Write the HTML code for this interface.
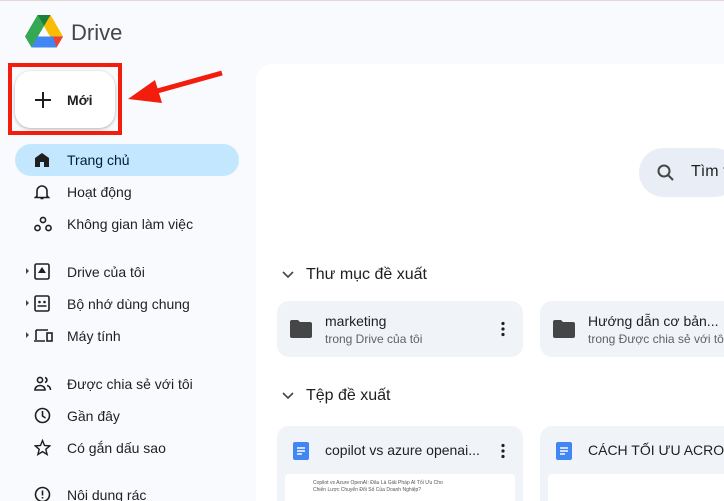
<!DOCTYPE html>
<html style="overflow:hidden"><head><meta charset="utf-8"><style>
*{margin:0;padding:0;box-sizing:border-box}
html,body{width:724px;height:501px;overflow:hidden}
body{background:#f8fafd;font-family:"Liberation Sans",Arial,sans-serif;color:#1f1f1f;position:relative}
.abs{position:absolute;white-space:nowrap}
.nav{position:absolute;left:67px;font-size:14px;color:#1f1f1f;white-space:nowrap}
.ic{position:absolute;left:34px}
.card{position:absolute;background:#f0f4f9;border-radius:12px}
</style></head><body>
<div class="abs" style="left:0;top:0;width:724px;height:1px;background:#e6d6dc"></div>
<svg class="abs" style="left:25px;top:15px" width="38" height="34" viewBox="0 0 38 34">
<path d="M12.5 0 L25.5 0 L38 21.5 L31.5 32.5 Z" fill="#fbbc04"/>
<path d="M12.5 0 L0 21.5 L6.5 32.5 L19 11 Z" fill="#34a853"/>
<path d="M6.5 32.5 L12.5 21.5 L38 21.5 L31.5 32.5 Z" fill="#4285f4"/>
<path d="M31.5 32.5 L38 21.5 L28 21.5 Z" fill="#ea4335"/>
<path d="M12.5 0 L19 11 L25.5 0Z" fill="#188038"/>
</svg>
<div class="abs" style="left:71px;top:20px;font-size:22px;color:#444746">Drive</div>
<div class="abs" style="left:8px;top:63px;width:114px;height:72px;border:4px solid #f21d0d"></div>
<div class="abs" style="left:15px;top:71px;width:100px;height:57px;background:#fff;border-radius:16px;box-shadow:0 1px 3px rgba(0,0,0,.3)"></div>
<svg class="abs" style="left:34px;top:91px" width="18" height="18"><path d="M9 1v16M1 9h16" stroke="#1f1f1f" stroke-width="2"/></svg>
<div class="abs" style="left:67px;top:92px;font-size:14px;font-weight:bold;color:#1f1f1f">Mới</div>
<svg class="abs" style="left:125px;top:68px" width="100" height="40"><path d="M97 5 L25 25" stroke="#f21d0d" stroke-width="5"/><path d="M3 31 L30 12 L37 35Z" fill="#f21d0d"/></svg>
<div class="abs" style="left:15px;top:144px;width:224px;height:32px;background:#c2e7ff;border-radius:16px"></div>
<svg class="ic" style="top:152px" width="16" height="16"><path d="M1 15V6L8 1L15 6V15H10V10H6V15Z" fill="#1f1f1f"/></svg>
<div class="nav" style="top:152px;color:#001d35">Trang chủ</div>
<svg class="ic" style="top:184px" width="16" height="16"><path d="M3 12V7a5 5 0 0 1 10 0v5l1.5 1.5h-13Z M6.5 14.5h3" stroke="#1f1f1f" stroke-width="1.6" fill="none"/></svg>
<div class="nav" style="top:184px">Hoạt động</div>
<svg class="ic" style="top:216px" width="18" height="16"><circle cx="9" cy="4" r="2.6" stroke="#1f1f1f" stroke-width="1.6" fill="none"/><circle cx="3.5" cy="12" r="2.6" stroke="#1f1f1f" stroke-width="1.6" fill="none"/><circle cx="14.5" cy="12" r="2.6" stroke="#1f1f1f" stroke-width="1.6" fill="none"/></svg>
<div class="nav" style="top:216px">Không gian làm việc</div>
<div class="abs" style="left:26px;top:268px;width:0;height:0;border-left:3px solid #444;border-top:3px solid transparent;border-bottom:3px solid transparent"></div>
<div class="abs" style="left:26px;top:300px;width:0;height:0;border-left:3px solid #444;border-top:3px solid transparent;border-bottom:3px solid transparent"></div>
<div class="abs" style="left:26px;top:332px;width:0;height:0;border-left:3px solid #444;border-top:3px solid transparent;border-bottom:3px solid transparent"></div>
<svg class="ic" style="top:263px" width="17" height="17"><rect x="1" y="1" width="14" height="15" rx="1.5" stroke="#1f1f1f" stroke-width="1.6" fill="none"/><path d="M4 10L8 4L12 10Z" fill="#1f1f1f"/></svg>
<div class="nav" style="top:264px">Drive của tôi</div>
<svg class="ic" style="top:295px" width="17" height="17"><rect x="1" y="1" width="14" height="15" rx="1.5" stroke="#1f1f1f" stroke-width="1.6" fill="none"/><circle cx="5.5" cy="7" r="1.3" fill="#1f1f1f"/><circle cx="10.5" cy="7" r="1.3" fill="#1f1f1f"/><path d="M3.5 11h9" stroke="#1f1f1f" stroke-width="1.5"/></svg>
<div class="nav" style="top:296px">Bộ nhớ dùng chung</div>
<svg class="ic" style="top:328px;left:33px" width="22" height="16"><path d="M3 2h12M3 2v10M1 13h11" stroke="#1f1f1f" stroke-width="1.6" fill="none"/><rect x="14" y="5" width="5" height="8" stroke="#1f1f1f" stroke-width="1.6" fill="none"/></svg>
<div class="nav" style="top:328px">Máy tính</div>
<svg class="ic" style="top:376px" width="18" height="16"><circle cx="6" cy="4" r="2.6" stroke="#1f1f1f" stroke-width="1.6" fill="none"/><path d="M1 14c0-3 2.5-4.5 5-4.5s5 1.5 5 4.5Z" stroke="#1f1f1f" stroke-width="1.6" fill="none"/><path d="M11 1.5a2.6 2.6 0 0 1 0 5M13 9.5c2 .5 3.5 2 3.5 4.5" stroke="#1f1f1f" stroke-width="1.6" fill="none"/></svg>
<div class="nav" style="top:376px">Được chia sẻ với tôi</div>
<svg class="ic" style="top:407px" width="17" height="17"><circle cx="8.5" cy="8.5" r="7" stroke="#1f1f1f" stroke-width="1.6" fill="none"/><path d="M8.5 4v5l3 2" stroke="#1f1f1f" stroke-width="1.6" fill="none"/></svg>
<div class="nav" style="top:408px">Gần đây</div>
<svg class="ic" style="top:439px" width="17" height="17"><path d="M8.5 1.5l2 5 5.3.4-4 3.4 1.3 5.2-4.6-2.9-4.6 2.9 1.3-5.2-4-3.4 5.3-.4Z" stroke="#1f1f1f" stroke-width="1.4" fill="none"/></svg>
<div class="nav" style="top:440px">Có gắn dấu sao</div>
<svg class="ic" style="top:486px" width="17" height="17"><circle cx="8.5" cy="8.5" r="7" stroke="#1f1f1f" stroke-width="1.6" fill="none"/><path d="M8.5 4.5v5M8.5 11v1.5" stroke="#1f1f1f" stroke-width="1.6"/></svg>
<div class="nav" style="top:487px">Nội dung rác</div>
<div class="abs" style="left:256px;top:64px;width:480px;height:437px;background:#fff;border-radius:16px 16px 0 0"></div>
<div class="abs" style="left:639px;top:148px;width:100px;height:49px;background:#e9eef6;border-radius:25px"></div>
<svg class="abs" style="left:656px;top:163px" width="20" height="20"><circle cx="8" cy="8" r="5.5" stroke="#444746" stroke-width="2" fill="none"/><path d="M12 12l5 5" stroke="#444746" stroke-width="2"/></svg>
<div class="abs" style="left:691px;top:163px;font-size:16px;color:#1f1f1f">Tìm t</div>
<svg class="abs" style="left:282px;top:270px" width="12" height="10"><path d="M1 2l5 5 5-5" stroke="#444746" stroke-width="1.6" fill="none"/></svg>
<div class="abs" style="left:306px;top:266px;font-size:16px">Thư mục đề xuất</div>
<div class="card" style="left:277px;top:301px;width:246px;height:56px"></div>
<svg class="abs" style="left:290px;top:320px" width="22" height="18"><path d="M0 2a2 2 0 0 1 2-2h6l2 2h10a2 2 0 0 1 2 2v12a2 2 0 0 1-2 2H2a2 2 0 0 1-2-2Z" fill="#444746"/></svg>
<div class="abs" style="left:325px;top:313px;font-size:14px">marketing</div>
<div class="abs" style="left:325px;top:332px;font-size:12px;color:#5f6368">trong Drive của tôi</div>
<svg class="abs" style="left:500px;top:321px" width="6" height="16"><circle cx="3" cy="2.5" r="1.6" fill="#1f1f1f"/><circle cx="3" cy="8" r="1.6" fill="#1f1f1f"/><circle cx="3" cy="13.5" r="1.6" fill="#1f1f1f"/></svg>
<div class="card" style="left:540px;top:301px;width:200px;height:56px"></div>
<svg class="abs" style="left:553px;top:320px" width="22" height="18"><path d="M0 2a2 2 0 0 1 2-2h6l2 2h10a2 2 0 0 1 2 2v12a2 2 0 0 1-2 2H2a2 2 0 0 1-2-2Z" fill="#444746"/></svg>
<div class="abs" style="left:588px;top:313px;font-size:14px">Hướng dẫn cơ bản...</div>
<div class="abs" style="left:588px;top:332px;font-size:12px;color:#5f6368">trong Được chia sẻ với tôi</div>
<svg class="abs" style="left:282px;top:391px" width="12" height="10"><path d="M1 2l5 5 5-5" stroke="#444746" stroke-width="1.6" fill="none"/></svg>
<div class="abs" style="left:306px;top:387px;font-size:16px">Tệp đề xuất</div>
<div class="card" style="left:277px;top:426px;width:246px;height:90px"></div>
<svg class="abs" style="left:293px;top:442px" width="16" height="18"><rect width="16" height="18" rx="2" fill="#4285f4"/><path d="M4 6h8M4 9h8M4 12h5" stroke="#fff" stroke-width="1.5"/></svg>
<div class="abs" style="left:325px;top:442px;font-size:14px">copilot vs azure openai...</div>
<svg class="abs" style="left:500px;top:443px" width="6" height="16"><circle cx="3" cy="2.5" r="1.6" fill="#1f1f1f"/><circle cx="3" cy="8" r="1.6" fill="#1f1f1f"/><circle cx="3" cy="13.5" r="1.6" fill="#1f1f1f"/></svg>
<div class="abs" style="left:285px;top:474px;width:230px;height:40px;background:#fff;border-radius:4px"></div>
<div class="abs" style="left:313px;top:480px;font-size:5px;line-height:7px;color:#555">Copilot vs Azure OpenAI: Đâu Là Giải Pháp AI Tối Ưu Cho<br>Chiến Lược Chuyển Đổi Số Của Doanh Nghiệp?</div>
<div class="card" style="left:540px;top:426px;width:200px;height:90px"></div>
<svg class="abs" style="left:556px;top:442px" width="16" height="18"><rect width="16" height="18" rx="2" fill="#4285f4"/><path d="M4 6h8M4 9h8M4 12h5" stroke="#fff" stroke-width="1.5"/></svg>
<div class="abs" style="left:588px;top:442px;font-size:14px">CÁCH TỐI ƯU ACRONIS</div>
<div class="abs" style="left:548px;top:474px;width:190px;height:40px;background:#fff;border-radius:4px"></div>
</body></html>
